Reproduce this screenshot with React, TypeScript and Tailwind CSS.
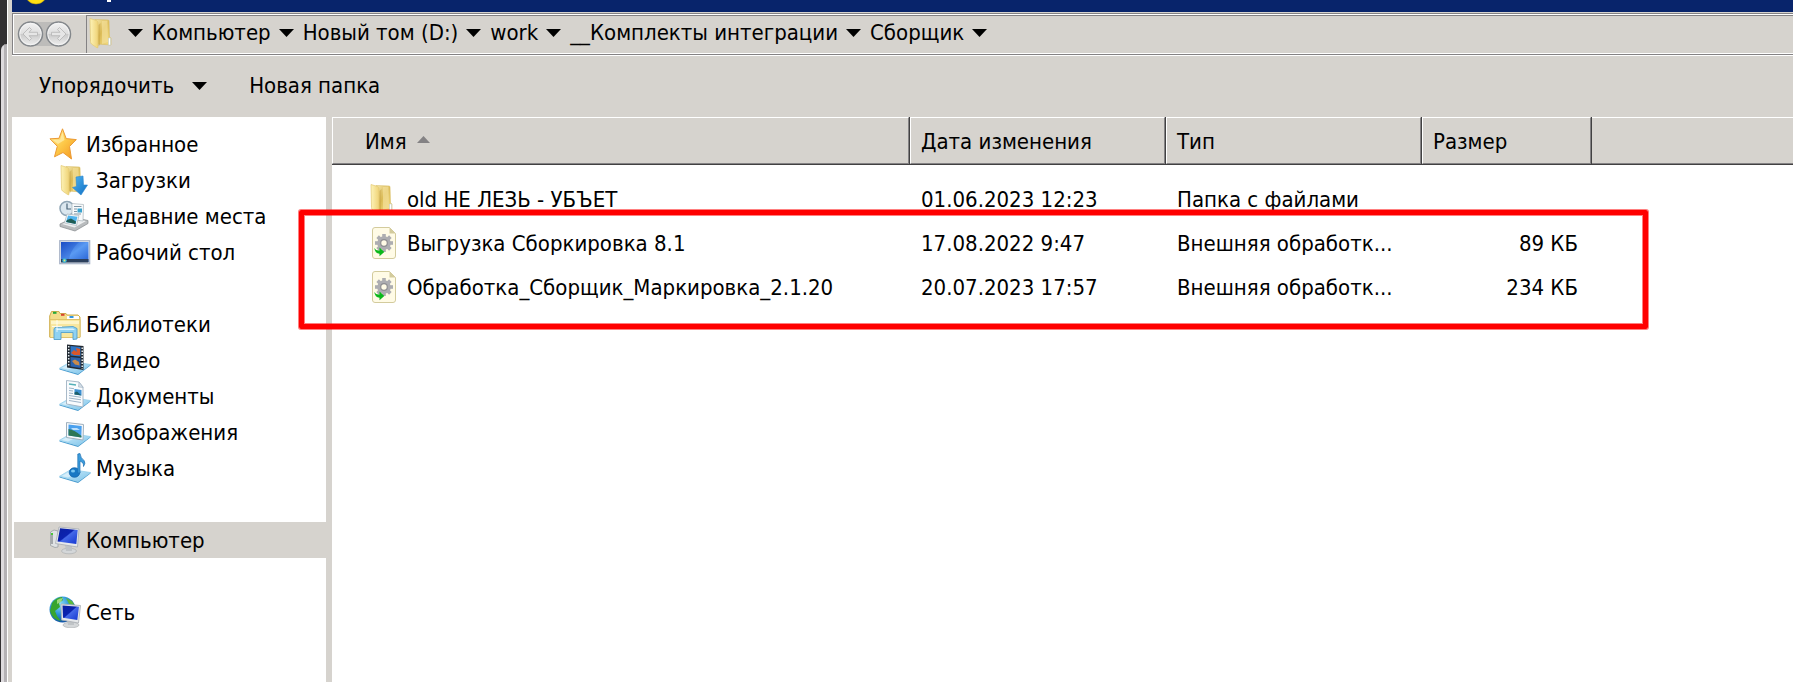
import type { ReactNode } from 'react';

type IconName =
  | 'star'
  | 'downloads'
  | 'recent'
  | 'desktop'
  | 'libraries'
  | 'video'
  | 'documents'
  | 'pictures'
  | 'music'
  | 'computer'
  | 'network';

interface NavItem {
  label: string;
  icon: IconName;
  active?: boolean;
}

interface NavGroup {
  root: NavItem;
  children: NavItem[];
}

const NAV_GROUPS: NavGroup[] = [
  {
    root: { label: 'Избранное', icon: 'star' },
    children: [
      { label: 'Загрузки', icon: 'downloads' },
      { label: 'Недавние места', icon: 'recent' },
      { label: 'Рабочий стол', icon: 'desktop' },
    ],
  },
  {
    root: { label: 'Библиотеки', icon: 'libraries' },
    children: [
      { label: 'Видео', icon: 'video' },
      { label: 'Документы', icon: 'documents' },
      { label: 'Изображения', icon: 'pictures' },
      { label: 'Музыка', icon: 'music' },
    ],
  },
  { root: { label: 'Компьютер', icon: 'computer', active: true }, children: [] },
  { root: { label: 'Сеть', icon: 'network' }, children: [] },
];

const PATH = ['Компьютер', 'Новый том (D:)', 'work', '__Комплекты интеграции', 'Сборщик'];

const FILES = [
  { name: 'old НЕ ЛЕЗЬ - УБЪЕТ',                 date: '01.06.2023 12:23', type: 'Папка с файлами',     size: '',       folder: true  },
  { name: 'Выгрузка Сборкировка 8.1',            date: '17.08.2022 9:47',  type: 'Внешняя обработк...', size: '89 КБ',  folder: false },
  { name: 'Обработка_Сборщик_Маркировка_2.1.20', date: '20.07.2023 17:57', type: 'Внешняя обработк...', size: '234 КБ', folder: false },
];

/* Shared gradients */
function Defs() {
  return (
    <svg width="0" height="0" className="absolute" aria-hidden="true">
      <defs>
        <linearGradient id="gold" x1="0" y1="0" x2="1" y2="1">
          <stop offset="0" stopColor="#fff0a0" />
          <stop offset="0.5" stopColor="#fdc848" />
          <stop offset="1" stopColor="#f3921c" />
        </linearGradient>
        <linearGradient id="folderFront" x1="0" y1="0" x2="1" y2="0">
          <stop offset="0" stopColor="#fdf3b8" />
          <stop offset="1" stopColor="#efd377" />
        </linearGradient>
        <linearGradient id="folderBack" x1="0" y1="0" x2="1" y2="1">
          <stop offset="0" stopColor="#f7e9ae" />
          <stop offset="0.45" stopColor="#dcbc58" />
          <stop offset="1" stopColor="#f6df85" />
        </linearGradient>
        <linearGradient id="screen" x1="0" y1="0" x2="1" y2="1">
          <stop offset="0" stopColor="#1a4bc4" />
          <stop offset="0.5" stopColor="#5a9af2" />
          <stop offset="1" stopColor="#2560d4" />
        </linearGradient>
        <linearGradient id="monitor" x1="0" y1="0" x2="1" y2="1">
          <stop offset="0" stopColor="#0a1fa0" />
          <stop offset="0.45" stopColor="#0b22b0" />
          <stop offset="0.5" stopColor="#4468e8" />
          <stop offset="1" stopColor="#1335d0" />
        </linearGradient>
        <linearGradient id="glass" x1="0" y1="0" x2="1" y2="1">
          <stop offset="0" stopColor="#d6f0fc" />
          <stop offset="1" stopColor="#7cc3ea" />
        </linearGradient>
        <linearGradient id="blueArrow" x1="0" y1="0" x2="1" y2="1">
          <stop offset="0" stopColor="#4fb4f0" />
          <stop offset="1" stopColor="#0f6fc4" />
        </linearGradient>
        <radialGradient id="globe" cx="0.4" cy="0.3" r="0.75">
          <stop offset="0" stopColor="#8fe4fa" />
          <stop offset="0.5" stopColor="#2b93d8" />
          <stop offset="1" stopColor="#0d4a9c" />
        </radialGradient>
        <linearGradient id="navButton" x1="0" y1="0" x2="0" y2="1">
          <stop offset="0" stopColor="#f4f4f4" />
          <stop offset="0.48" stopColor="#dedede" />
          <stop offset="0.52" stopColor="#cbcbcb" />
          <stop offset="1" stopColor="#f0f0f0" />
        </linearGradient>
      </defs>
    </svg>
  );
}

function FolderShape() {
  return (
    <>
      <path d="M7 2.5 L20 3 Q21 3 21 4 L21.5 20 L23 21 L23 28 L9 27 Z" fill="url(#folderBack)" stroke="#d9bd66" strokeWidth="0.6" />
      <path d="M14 4 L19.5 3.5 L20 25 L14 27 Z" fill="#f3e09a" opacity="0.7" />
      <path d="M2 1.5 L8.5 3.5 Q10 4 10 6 L10 30 Q10 31.5 8.5 30.5 L3.5 27 Q2.5 26 2.5 24.5 Z" fill="url(#folderFront)" stroke="#e2c873" strokeWidth="0.7" />
      <path d="M10.5 8 L12.5 6 L12 28 L10.5 29 Z" fill="#c9a443" opacity="0.55" />
    </>
  );
}

function GlassBase() {
  return (
    <>
      <path d="M0.5 24.5 L19 29.5 L31.5 20.5 L31.5 21.5 L19 31 L0.5 25.5 Z" fill="#4a9cd0" />
      <path d="M0.5 24.3 L12 17.5 L31.5 20.5 L19 29.5 Z" fill="url(#glass)" stroke="#8ccbea" strokeWidth="0.7" />
      <path d="M3 24 L12 19 L20 20 L9 25.5 Z" fill="#fff" opacity="0.45" />
    </>
  );
}

const ICONS: Record<IconName, ReactNode> = {
  star: (
    <>
      <path d="M13.5 0.8 L17.2 10.6 L27.3 11.6 L20.5 18.5 L22.5 31 L14 24.5 L5.5 28.8 L8.3 18.3 L1 10.8 L10 10.3 Z" fill="url(#gold)" stroke="#eb9a34" strokeWidth="1" strokeLinejoin="round" />
      <path d="M13.5 4 L15.5 12 L9 16 L4 12 L11.2 11.5 Z" fill="#fff6c0" opacity="0.6" />
    </>
  ),
  downloads: (
    <>
      <FolderShape />
      <path d="M17 13 L24 12 L24.5 21 L28.5 21 L22 31 L13.5 23.5 L17.5 22.5 Z" fill="url(#blueArrow)" stroke="#2b86cf" strokeWidth="0.6" />
    </>
  ),
  recent: (
    <>
      <circle cx="8" cy="8.5" r="7" fill="#dbe7ef" stroke="#8fa5b5" strokeWidth="1.5" />
      <path d="M8 3.5 V9 H12" fill="none" stroke="#4a6478" strokeWidth="1.2" />
      <path d="M1 24 L15 17.5 L29 20.5 L29 23.5 L16 31 L1 26.5 Z" fill="#b9bcbe" stroke="#85898c" strokeWidth="0.7" />
      <path d="M3 24 L15 19 L27 21 L15.5 27.5 Z" fill="#eef0f1" />
      <path d="M13 3.5 L24.5 4.5 L24 21 L13 19.5 Z" fill="#f8fafb" stroke="#a9b4bc" strokeWidth="0.7" />
      <path d="M15 6.5 H22.5 M15 9 H18 M15 11.5 H18 M15 14 H22" stroke="#8297a6" strokeWidth="1" />
      <rect x="18.5" y="8.5" width="4.5" height="4" fill="#3aa3cf" />
      <path d="M8 14 L20 15.5 L17.5 25.5 L5.5 23 Z" fill="#f6f8f9" stroke="#a9b4bc" strokeWidth="0.7" />
      <path d="M9 15.5 L18.5 16.7 L16.5 24 L7 22 Z" fill="#52b5ee" />
      <path d="M8 20 L12 18.5 L17 21.5 L16.5 24 L7 22 Z" fill="#1f5d54" />
    </>
  ),
  desktop: (
    <>
      <rect x="0.7" y="4.7" width="30" height="23" fill="#e4e8ee" stroke="#a9b4c8" strokeWidth="1.2" />
      <rect x="2" y="6" width="27.5" height="20" fill="url(#screen)" />
      <path d="M2 6 H20 Q12 13 10 23 H2 Z" fill="#1a50c8" opacity="0.3" />
      <rect x="2" y="23" width="27.5" height="3.5" fill="#2b3f5c" />
      <circle cx="5.5" cy="24.5" r="2.2" fill="#35b7d8" />
      <circle cx="5.5" cy="24.5" r="0.9" fill="#f4e36a" />
    </>
  ),
  libraries: (
    <>
      <path d="M1.5 6 L2.5 3.5 H10 L11 5.5 H17 L18 7 H29 L31 9 V29 H0.7 V8 Z" fill="#f3dd8b" stroke="#cfae4f" strokeWidth="1" />
      <rect x="4" y="3.8" width="3.5" height="2" fill="#22a83c" />
      <rect x="12" y="5.8" width="3.5" height="2" fill="#d8432f" />
      <path d="M18 8 H30 V11 H18 Z" fill="#fff" />
      <rect x="20.5" y="8" width="4" height="2" fill="#3297e0" />
      <path d="M1 11.5 H31 V29.5 H1 Z" fill="#f8e79f" stroke="#d9bb5f" strokeWidth="0.8" />
      <path d="M2 13 H30 V16 H2 Z" fill="#fdf5c8" />
      <path d="M6 19.5 L24 18.5 L28 20.5 V31 L24 31.5 V24.5 H12 V31.5 H5 V21 Z" fill="#8fd2f2" stroke="#559fcb" strokeWidth="0.9" />
      <path d="M7 20.5 H24 L26 22 H8 Z" fill="#d9f2fd" />
      <path d="M8 12 V24 M3 18.5 H13" stroke="#fff" strokeWidth="1" opacity="0.8" />
    </>
  ),
  video: (
    <>
      <GlassBase />
      <path d="M8 0.5 L24.5 2 L24.5 26 L8 23.5 Z" fill="#222a33" />
      <path d="M11.5 2 L21.5 3 L21.5 12.5 L11.5 11.5 Z" fill="#2f74c4" />
      <path d="M11.5 13 L21.5 14 L21.5 24 L11.5 22.5 Z" fill="#2a62ae" />
      <path d="M12 9 L15 6 L18 8 L17 4 L21 5 L21 11 L15 11 Z" fill="#d9572b" />
      <path d="M13 17 L16 15.5 L20 18 L20.5 21.5 L16 20.5 Z" fill="#c98a4a" />
      <path d="M9.7 2 V23" stroke="#e8f0f4" strokeWidth="1.5" strokeDasharray="1.5 1.5" />
      <path d="M23.2 3.5 V25" stroke="#e8f0f4" strokeWidth="1.5" strokeDasharray="1.5 1.5" />
    </>
  ),
  documents: (
    <>
      <GlassBase />
      <path d="M7.5 0.5 L20 2 L24 7 L24 27 L7.5 24 Z" fill="#f9fbfd" stroke="#9fb2c3" strokeWidth="0.9" />
      <path d="M20 2 L19.5 7 L24 7.5 Z" fill="#d4dee7" stroke="#9fb2c3" strokeWidth="0.6" />
      <path d="M10 4 L17 5" stroke="#56b0b8" strokeWidth="1.3" />
      <path d="M10 8 L15 8.7 M10 10.5 L14 11 M10 13 L14 13.5 M10 15.5 L22 17.3 M10 18 L22 19.8 M10 20.5 L22 22.5" stroke="#9db4c9" strokeWidth="1" />
      <path d="M15.5 9 L22.5 10 V15.5 L15.5 14.5 Z" fill="#3b8fd2" />
      <path d="M15.5 12.5 L18 11.5 L22.5 15.5 L15.5 14.5 Z" fill="#1c5f6b" />
    </>
  ),
  pictures: (
    <>
      <GlassBase />
      <path d="M7.5 6.5 L24.5 8.5 L24 24 L7.5 21.5 Z" fill="#f7f9fb" stroke="#9fb0be" strokeWidth="1" />
      <path d="M9.5 8.5 L22.7 10 L22.3 21.5 L9.5 19.5 Z" fill="#4aa0ee" />
      <path d="M9.5 13 Q15 13.5 22.5 20 L22.3 21.5 L9.5 19.5 Z" fill="#2c7656" />
      <path d="M12 12 L18 12 L21 14 L14 14 Z" fill="#d8effd" opacity="0.8" />
    </>
  ),
  music: (
    <>
      <GlassBase />
      <ellipse cx="15.5" cy="20.5" rx="5.3" ry="4.8" fill="#1878c4" stroke="#0f5ea6" strokeWidth="0.7" />
      <path d="M18.8 21 V2 L21 1.5 Q21.5 6 25 8.5 Q27 11 24.5 14.5 Q25 10.5 21 9 V21 Z" fill="#3c9cdc" stroke="#1b6fb2" strokeWidth="0.7" />
      <ellipse cx="14" cy="19" rx="2" ry="1.5" fill="#7cc8f2" />
    </>
  ),
  computer: (
    <>
      <path d="M1.5 8 L5 6 L9 7 V23 L6 23.5 L1.5 21.5 Z" fill="#dfe2e4" stroke="#9a9fa3" strokeWidth="0.8" />
      <path d="M3 10 V20" stroke="#6a6f73" strokeWidth="1" />
      <rect x="2" y="9" width="2" height="2" fill="#4ac63a" />
      <ellipse cx="20" cy="27" rx="7.5" ry="2.8" fill="#d4d7d9" stroke="#a7abad" strokeWidth="0.6" />
      <path d="M16 21 L23 22 L23 27 H17 Z" fill="#bfc3c6" />
      <path d="M10 3 L30 5 L28.5 23 L6.5 19.5 Z" fill="#e6e8ea" stroke="#a7acb3" strokeWidth="0.8" />
      <path d="M11 4.2 L28.7 6 L27.3 20 L8.5 17.5 Z" fill="url(#monitor)" />
    </>
  ),
  network: (
    <>
      <circle cx="13.5" cy="13.5" r="13" fill="url(#globe)" />
      <path d="M3 7 Q7 1.5 13 1 L14 4 L10 7 L11 11 L6 15 L8 20 L12 25 Q3 23 1 15 Z" fill="#37a52f" />
      <path d="M8 4 Q11 2 14 2 L12 6 L8 8 Z" fill="#c4ee9a" opacity="0.7" />
      <path d="M17 2 L23 5 L25.5 9 L20 8 Z" fill="#5cba3c" />
      <ellipse cx="22" cy="29" rx="8" ry="2.8" fill="#d4d7d9" stroke="#a7abad" strokeWidth="0.6" />
      <path d="M18 23 L25 24 L25 29 H19 Z" fill="#bfc3c6" />
      <path d="M12 8 L31.5 9.5 L29.5 27 L12.5 24 Z" fill="#e6e8ea" stroke="#a7acb3" strokeWidth="0.8" />
      <path d="M13.5 9.5 L30 10.8 L28.3 24 L14 21.8 Z" fill="url(#monitor)" />
    </>
  ),
};

function Icon({ name }: { name: IconName }) {
  return (
    <svg viewBox="0 0 32 32" className="w-8 h-8 shrink-0" aria-hidden="true">
      {ICONS[name]}
    </svg>
  );
}

function FolderIcon() {
  return (
    <svg viewBox="0 0 24 32" className="w-6 h-8 shrink-0" aria-hidden="true">
      <FolderShape />
      <path d="M20.5 21 H22.5 V28 H20.5 Z" fill="#fff" stroke="#b9c9d2" strokeWidth="0.5" />
    </svg>
  );
}

function ProcessingIcon() {
  return (
    <svg viewBox="0 0 24 32" className="w-6 h-8 shrink-0" aria-hidden="true">
      <path d="M3 0.5 H17.5 L23.5 6.5 V29 Q23.5 31.5 21 31.5 H3 Q0.5 31.5 0.5 29 V3 Q0.5 0.5 3 0.5 Z" fill="#fffbe6" stroke="#d3cb9d" />
      <path d="M17.5 0.5 L23.5 6.5 H17.5 Z" fill="#d3cb9d" />
      <g fill="#adadb1">
        <circle cx="12" cy="16" r="6.8" />
        <rect x="10.2" y="7" width="3.6" height="18" />
        <rect x="10.2" y="7" width="3.6" height="18" transform="rotate(45 12 16)" />
        <rect x="10.2" y="7" width="3.6" height="18" transform="rotate(90 12 16)" />
        <rect x="10.2" y="7" width="3.6" height="18" transform="rotate(135 12 16)" />
      </g>
      <circle cx="12" cy="16" r="3.3" fill="#fffbe6" stroke="#8e8e92" strokeWidth="1.2" />
      <path d="M2.3 21 Q4 24 7.5 23.5 V20.5 L12.3 25 L7.5 29.2 V26.8 Q3 26.5 2.3 21 Z" fill="#0bb81b" />
    </svg>
  );
}

function Caret() {
  return (
    <svg viewBox="0 0 15 8" className="w-[15px] h-2 shrink-0" aria-hidden="true">
      <path d="M0 0 H15 L7.5 8 Z" fill="#000" />
    </svg>
  );
}

function AddressBar() {
  return (
    <div className="border border-r-0 border-[#848284]">
      <div className="flex h-10 border-l border-y border-white">
        <div className="w-[73px] flex items-center pl-[3px] border-r border-[#848284]">
          <svg viewBox="0 0 56 28" className="w-14 h-7" aria-hidden="true">
            <path d="M13 2 H42 Q54 3 54 14 Q54 25 42 26 H13 Z" fill="#bdbcba" />
            {[13.5, 41.5].map((cx) => (
              <g key={cx}>
                <circle cx={cx} cy="14" r="12" fill="url(#navButton)" stroke="#84888c" strokeWidth="1.5" />
                <circle cx={cx} cy="14" r="10.7" fill="none" stroke="#f6f6f6" strokeWidth="0.8" />
              </g>
            ))}
            <path d="M6 14 L12.5 7.5 L14.5 9.5 L12 12.3 H20.5 V15.7 H12 L14.5 18.5 L12.5 20.5 Z" fill="#e6e6e6" stroke="#b4b4b4" strokeWidth="0.8" />
            <path d="M49 14 L42.5 7.5 L40.5 9.5 L43 12.3 H34.5 V15.7 H43 L40.5 18.5 L42.5 20.5 Z" fill="#e6e6e6" stroke="#b4b4b4" strokeWidth="0.8" />
          </svg>
        </div>
        <nav aria-label="Адрес" className="flex-1 flex items-center border-t border-[#848284] pl-px pb-1">
          <FolderIcon />
          <div className="flex items-center gap-[9px] pl-4">
            <Caret />
            {PATH.map((part) => (
              <button key={part} className="flex items-center gap-2 whitespace-nowrap">
                {part}
                <Caret />
              </button>
            ))}
          </div>
        </nav>
      </div>
    </div>
  );
}

function NavLink({ item, child = false }: { item: NavItem; child?: boolean }) {
  return (
    <a
      href="#"
      className={
        child
          ? 'flex items-center gap-[5px] h-9 pl-[45px] whitespace-nowrap'
          : item.active
            ? 'flex items-center gap-[5px] h-9 pl-[35px] whitespace-nowrap bg-[#d6d3ce]'
            : 'flex items-center gap-[5px] h-9 pl-[35px] whitespace-nowrap'
      }
    >
      <Icon name={item.icon} />
      <span className="pt-0.5">{item.label}</span>
    </a>
  );
}

function Sidebar() {
  return (
    <aside className="w-[314px] shrink-0 bg-white pl-0.5 pt-[9px] space-y-9">
      {NAV_GROUPS.map(({ root, children }) => (
        <div key={root.label}>
          <NavLink item={root} />
          {children.map((item) => (
            <NavLink key={item.label} item={item} child />
          ))}
        </div>
      ))}
    </aside>
  );
}

function HeaderCell({ children, first = false }: { children: ReactNode; first?: boolean }) {
  return (
    <th className="p-0 font-normal text-left">
      <div className="border-r border-b border-[#424142]">
        <div
          className={
            first
              ? 'h-[47px] flex items-center gap-[10px] pt-0.5 pl-8 border border-t-white border-l-white border-r-[#848284] border-b-[#848284]'
              : 'h-[47px] flex items-center pt-0.5 pl-[10px] border border-t-white border-l-white border-r-[#848284] border-b-[#848284]'
          }
        >
          {children}
        </div>
      </div>
    </th>
  );
}

function FileList() {
  return (
    <main className="relative flex-1 min-w-0 bg-white">
      <table className="w-full table-fixed border-collapse">
        <colgroup>
          <col className="w-[578px]" />
          <col className="w-[256px]" />
          <col className="w-[256px]" />
          <col className="w-[170px]" />
          <col />
        </colgroup>
        <thead className="bg-[#d6d3ce]">
          <tr>
            <HeaderCell first>
              <button>Имя</button>
              <svg viewBox="0 0 13 7" className="w-[13px] h-[7px] mb-1" aria-hidden="true">
                <path d="M0 7 L6.5 0 L13 7 Z" fill="#848284" />
              </svg>
            </HeaderCell>
            <HeaderCell><button>Дата изменения</button></HeaderCell>
            <HeaderCell><button>Тип</button></HeaderCell>
            <HeaderCell><button>Размер</button></HeaderCell>
            <td className="p-0">
              <div className="border-b border-[#424142]">
                <div className="h-[47px] border-y border-t-white border-b-[#848284]" />
              </div>
            </td>
          </tr>
        </thead>
        <tbody className="before:block before:h-3">
          {FILES.map((file) => (
            <tr key={file.name} className="h-11 whitespace-nowrap">
              <td className="p-0">
                <div className={file.folder ? 'flex items-center gap-[14px] pl-[37px]' : 'flex items-center gap-[11px] pl-10'}>
                  {file.folder ? <FolderIcon /> : <ProcessingIcon />}
                  <span className="pt-0.5">{file.name}</span>
                </div>
              </td>
              <td className="pt-0.5 pb-0 pl-[11px]">{file.date}</td>
              <td className="pt-0.5 pb-0 pl-[11px]">{file.type}</td>
              <td className="pt-0.5 pb-0 pr-[14px] text-right">{file.size}</td>
              <td />
            </tr>
          ))}
        </tbody>
      </table>

      {/* Highlight around the two processing files */}
      <div className="absolute -left-[33px] top-[93px] w-[1349px] h-[119px] border-5 border-[#ff0000] rounded-xs shadow-[0_0_0_1px_#ff000080,inset_0_0_0_1px_#ff000080]" />
    </main>
  );
}

export default function App() {
  return (
    <div className="min-h-screen flex overflow-hidden bg-[#d6d3ce] text-black text-[22px] leading-7 font-['DejaVu_Sans_Condensed','DejaVu_Sans',sans-serif]">
      <Defs />

      {/* Window frame */}
      <div className="w-[7px] shrink-0 flex flex-col bg-[#333133]">
        <div className="h-11 mr-px" />
        <div className="flex-1 ml-px rounded-tl-lg border-r-3 border-[#b5b2b5] bg-[#dedbde]" />
      </div>
      <div className="w-px shrink-0 bg-white" />

      <div className="flex-1 min-w-0 flex flex-col pl-1">
        <div className="h-3 bg-[#08246b]">
          <svg viewBox="0 0 120 12" className="w-[120px] h-3" aria-hidden="true">
            <circle cx="24" cy="-7" r="11" fill="#ffe014" stroke="#c9a400" strokeWidth="0.5" />
            <rect x="95" y="0" width="4" height="2" fill="#fff" />
          </svg>
        </div>
        <div className="pt-px">
          <AddressBar />
        </div>
        <div className="flex items-center h-[62px] pl-[27px] pb-0.5 gap-[42px] border-t border-white">
          <button className="flex items-center gap-[18px]">
            Упорядочить
            <Caret />
          </button>
          <button>Новая папка</button>
        </div>
        <div className="flex-1 flex gap-1.5">
          <Sidebar />
          <FileList />
        </div>
      </div>
    </div>
  );
}
